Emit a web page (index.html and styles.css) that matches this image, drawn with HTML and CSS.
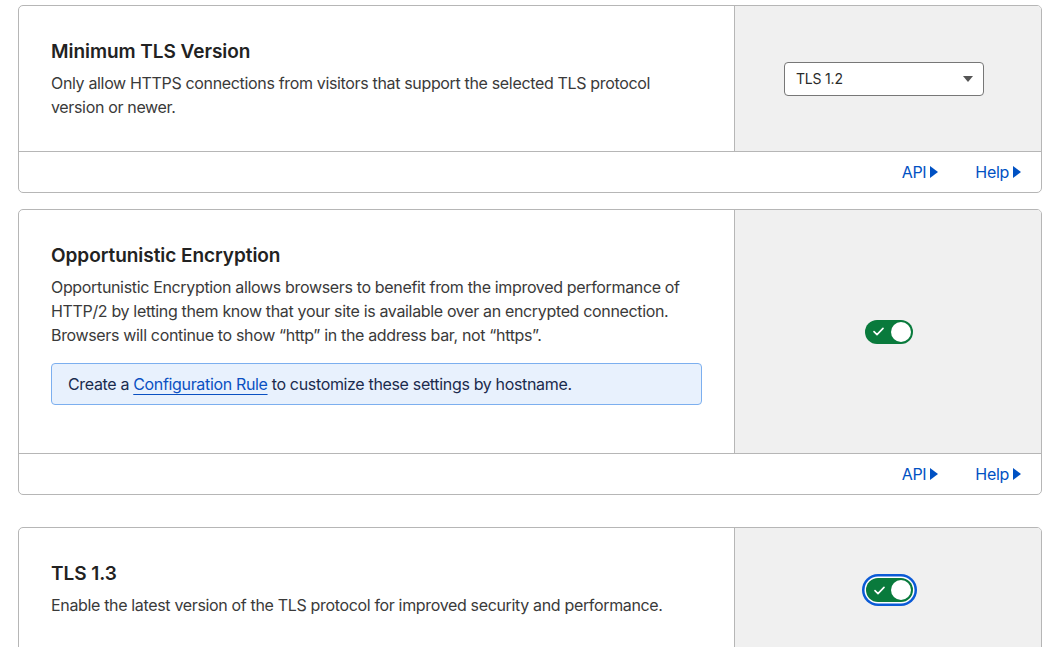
FILE: index.html
```html
<!DOCTYPE html>
<html lang="en">
<head>
<meta charset="utf-8">
<title>SSL/TLS Edge Certificates</title>
<link rel="stylesheet" href="styles.css">
</head>
<body>
<div class="page">
  <section class="card">
    <div class="card-main">
      <div class="card-body">
        <h3 class="card-title">Minimum TLS Version</h3>
        <p class="card-desc">Only allow HTTPS connections from visitors that support the selected TLS protocol version or newer.</p>
      </div>
      <div class="card-control control-select">
        <div class="select">
          <span class="select-value">TLS 1.2</span>
          <svg class="select-caret" width="10" height="6" viewBox="0 0 10 6"><path d="M0 0h10L5 6z" fill="#555"/></svg>
        </div>
      </div>
    </div>
    <div class="card-footer">
      <a class="footer-link" href="#">API<svg class="tri" width="8" height="12" viewBox="0 0 8 12"><path d="M0 0l8 6-8 6z" fill="currentColor"/></svg></a>
      <a class="footer-link" href="#">Help<svg class="tri" width="8" height="12" viewBox="0 0 8 12"><path d="M0 0l8 6-8 6z" fill="currentColor"/></svg></a>
    </div>
  </section>

  <section class="card">
    <div class="card-main">
      <div class="card-body">
        <h3 class="card-title">Opportunistic Encryption</h3>
        <p class="card-desc">Opportunistic Encryption allows browsers to benefit from the improved performance of HTTP/2 by letting them know that your site is available over an encrypted connection. Browsers will continue to show “http” in the address bar, not “https”.</p>
        <div class="notice">Create a <a class="notice-link" href="#">Configuration Rule</a> to customize these settings by hostname.</div>
      </div>
      <div class="card-control control-center">
        <span class="toggle">
          <svg class="toggle-check" width="11" height="9" viewBox="0 0 11 9"><path d="M1 4.6l3 3L10 1.4" fill="none" stroke="#fff" stroke-width="1.6" stroke-linecap="round" stroke-linejoin="round"/></svg>
          <span class="toggle-knob"></span>
        </span>
      </div>
    </div>
    <div class="card-footer">
      <a class="footer-link" href="#">API<svg class="tri" width="8" height="12" viewBox="0 0 8 12"><path d="M0 0l8 6-8 6z" fill="currentColor"/></svg></a>
      <a class="footer-link" href="#">Help<svg class="tri" width="8" height="12" viewBox="0 0 8 12"><path d="M0 0l8 6-8 6z" fill="currentColor"/></svg></a>
    </div>
  </section>

  <section class="card card-spaced">
    <div class="card-main">
      <div class="card-body card-body-tall">
        <h3 class="card-title">TLS 1.3</h3>
        <p class="card-desc">Enable the latest version of the TLS protocol for improved security and performance.</p>
      </div>
      <div class="card-control control-center control-top">
        <span class="toggle toggle-focused">
          <svg class="toggle-check" width="11" height="9" viewBox="0 0 11 9"><path d="M1 4.6l3 3L10 1.4" fill="none" stroke="#fff" stroke-width="1.6" stroke-linecap="round" stroke-linejoin="round"/></svg>
          <span class="toggle-knob"></span>
        </span>
      </div>
    </div>
  </section>
</div>
</body>
</html>
```
FILE: styles.css
```css
* { box-sizing: border-box; }
html, body { margin: 0; padding: 0; background: #fff; }
body {
  font-family: Inter, "Noto Sans", "Liberation Sans", sans-serif;
  color: #3a3a3a;
  -webkit-font-smoothing: antialiased;
}
.page {
  padding: 5px 14px 0 18px;
  width: 1056px;
}
.card {
  width: 1024px;
  border: 1px solid #b6b6b6;
  border-radius: 5px;
  overflow: hidden;
  margin-bottom: 16px;
  background: #fff;
}
.card-spaced { margin-top: 32px; }
.card-main { display: flex; }
.card-body {
  width: 715px;
  padding: 32px;
}
.card-body-tall { padding-bottom: 80px; }
.card-title {
  margin: 2px 0 7px;
  font-size: 19px;
  line-height: 24px;
  font-weight: 600;
  color: #222;
  letter-spacing: -0.05px;
}
.card-desc {
  margin: 0;
  font-size: 16px;
  line-height: 24px;
  color: #3a3a3a;
  letter-spacing: -0.34px;
}
.card-control {
  flex: 1;
  background: #f0f0f0;
  border-left: 1px solid #b6b6b6;
  display: flex;
  align-items: center;
}
.control-select { padding-left: 49px; }
.control-center { justify-content: center; padding-left: 2px; }
.control-top { align-items: flex-start; padding-top: 50px; }
.select {
  width: 200px;
  height: 34px;
  border: 1px solid #777;
  border-radius: 4px;
  background: #fff;
  display: flex;
  align-items: center;
  justify-content: space-between;
  padding: 0 10px 0 11px;
  font-size: 14px;
  color: #2a2a2a;
  letter-spacing: -0.2px;
}
.select-caret { display: block; }
.notice {
  margin: 16px 0 16px;
  padding: 8px 16px;
  border: 1px solid #7cafef;
  border-radius: 4px;
  background: #e8f1fd;
  color: #1b2b4d;
  font-size: 16px;
  line-height: 24px;
  letter-spacing: -0.34px;
}
.notice-link {
  color: #0a50c2;
  text-decoration: underline;
  text-underline-offset: 4px;
  text-decoration-thickness: 1px;
}
.toggle {
  position: relative;
  display: inline-flex;
  align-items: center;
  width: 48px;
  height: 24px;
  border-radius: 12px;
  background: #097a3c;
}
.toggle-focused {
  width: 47px;
  box-shadow: 0 0 0 1.5px #fff, 0 0 0 4px #0a5ad6;
}
.toggle-check { margin-left: 8px; display: block; }
.toggle-knob {
  position: absolute;
  right: 2px;
  top: 2px;
  width: 20px;
  height: 20px;
  border-radius: 50%;
  background: #fff;
}
.card-footer {
  height: 41px;
  border-top: 1px solid #b6b6b6;
  display: flex;
  justify-content: flex-end;
  align-items: center;
  gap: 37px;
  padding-right: 20px;
}
.footer-link {
  display: inline-flex;
  align-items: center;
  gap: 4px;
  color: #0051c3;
  text-decoration: none;
  font-size: 16px;
  line-height: 24px;
  letter-spacing: -0.3px;
}
.tri { display: block; }
```
